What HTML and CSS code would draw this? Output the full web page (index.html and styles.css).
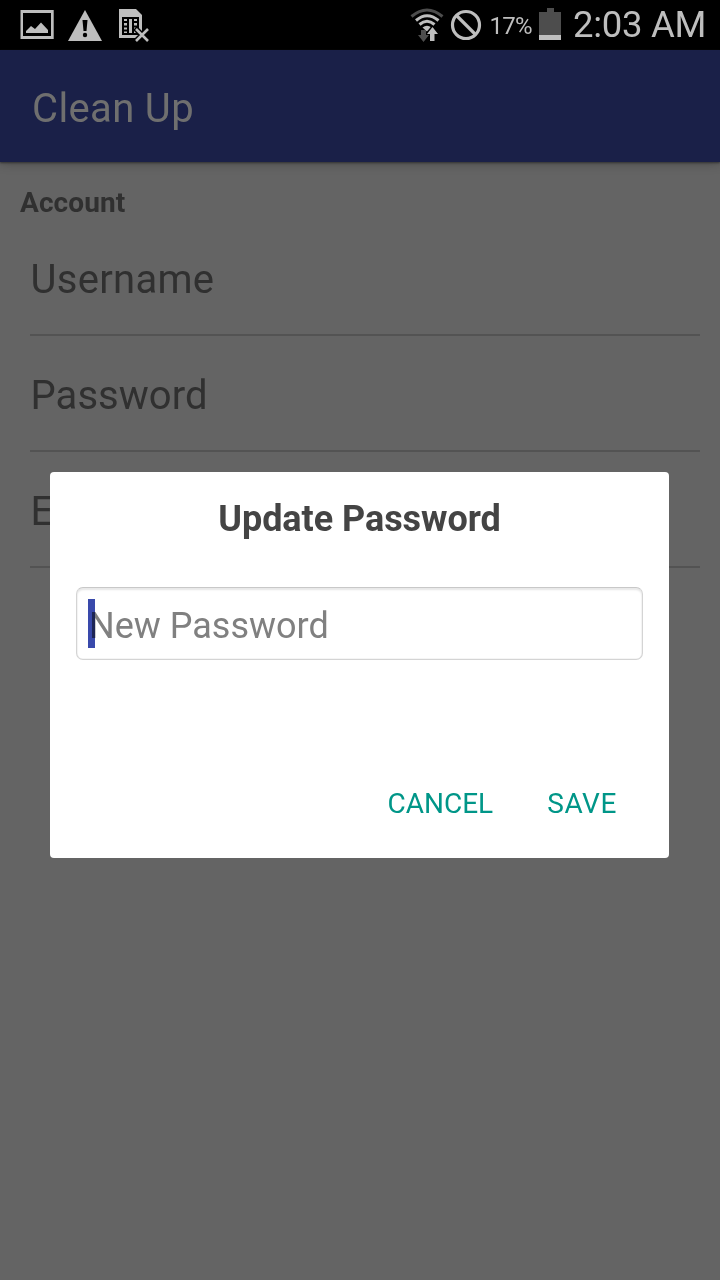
FILE: index.html
```html
<!DOCTYPE html>
<html lang="en">
<head>
<meta charset="utf-8">
<title>Clean Up</title>
<link rel="stylesheet" href="styles.css">
</head>
<body>
<div class="screen">
  <header class="status">
    <svg class="notices" width="170" height="50" viewBox="0 0 170 50">
      <path fill="#bebebe" fill-rule="evenodd" d="M20.500 10H53.700V39H20.500ZM23 13V36H51V13Z"/>
      <path fill="#bebebe" d="M26 33V31L31 26L35 29L41 22.500L48 30V33Z"/>
      <path fill="#bebebe" d="M85 10L102 41H68Z"/>
      <path fill="#000" d="M82.500 20H87.500L86.500 31H83.500Z"/>
      <circle cx="85" cy="35" r="2.200"/>
      <path fill="#bebebe" d="M119 9H136L142 15V38H119Z"/>
      <path fill="#000" fill-rule="evenodd" d="M122 17H139V35H122ZM124 19V21H127V19ZM124 23V25.500H127V23ZM124 27.500V29.500H127V27.500ZM124 31.500V33H127V31.500ZM129 19V33H132V19ZM134 19V21H137V19ZM134 23V25.500H137V23ZM134 27.500V33H137V27.500Z"/>
      <path fill="none" stroke="#000" stroke-width="5.500" d="M135 28L149 42M149 28L135 42"/>
      <path fill="none" stroke="#bebebe" stroke-width="2.600" d="M136 29L148 41M148 29L136 41"/>
    </svg>
    <div class="system">
      <svg width="74" height="50" viewBox="408 0 74 50">
        <g fill="none" stroke-width="3">
          <path stroke="#4d4d4d" d="M411.500 16.500Q427 3.500 442.500 16.500"/>
          <path stroke="#bebebe" d="M416 20.500Q427 11 438.500 20.500"/>
          <path stroke="#bebebe" d="M419.500 24.500Q427 18 434.500 24.500"/>
        </g>
        <path fill="#bebebe" d="M422.500 27.500Q427 23.800 431.500 27.500L427 31.500Z"/>
        <path fill="#000" d="M431.500 26L438 34H425Z"/>
        <path fill="#4d4d4d" d="M421 30H426V35H429L423.500 42L418 35H421Z"/>
        <path fill="#bebebe" d="M432.500 27L438 34H434.500V41H430V34H427Z"/>
        <circle cx="466" cy="25" r="13.500" fill="none" stroke="#bebebe" stroke-width="3.200"/>
        <path stroke="#bebebe" stroke-width="3.200" d="M456.500 15.500L475.500 34.500"/>
      </svg>
      <span class="percent">17%</span>
      <svg class="battery" width="22" height="50" viewBox="0 0 22 50">
        <path fill="#4d4d4d" d="M8 8H15V12H22V40H0V12H8Z"/>
        <path fill="#bebebe" d="M0 35H22V40H0Z"/>
      </svg>
      <time class="clock">2:03 AM</time>
    </div>
  </header>
  <div class="appbar"><h1 class="app-title">Clean Up</h1></div>
  <main class="settings">
    <h2 class="section-title">Account</h2>
    <ul class="rows">
      <li class="row"><span>Username</span></li>
      <li class="row"><span>Password</span></li>
      <li class="row"><span>Email</span></li>
    </ul>
  </main>
  <section class="dialog">
    <h2 class="dialog-title">Update Password</h2>
    <div class="field"><span class="caret"></span><span class="hint">New Password</span></div>
    <div class="actions"><span class="cancel">CANCEL</span><span class="save">SAVE</span></div>
  </section>
</div>
</body>
</html>
```
FILE: styles.css
```css
* { box-sizing: border-box; }
body { margin: 0; font-family: Roboto, "Liberation Sans", sans-serif; }
h1, h2, ul { margin: 0; padding: 0; list-style: none; }
.screen { position: relative; width: 720px; height: 1280px; overflow: hidden; background: #646464; }
.status { display: flex; justify-content: space-between; height: 50px; background: #000; color: #bebebe; }
.system { display: flex; padding-right: 14px; line-height: 50px; white-space: nowrap; }
.percent { width: 57px; padding: 1px 0 0 7.500px; font-size: 24px; letter-spacing: -.7px; }
.clock { width: 145px; padding-left: 12px; font-size: 36.500px; letter-spacing: -.3px; }
.appbar { display: flex; align-items: center; height: 112px; padding: 4px 32px 0; background: #1a2048; box-shadow: 0 1px 2px #333, 0 2px 10px rgba(0, 0, 0, .22); position: relative; }
.app-title { font-size: 40px; font-weight: 400; letter-spacing: .35px; color: #6f6f6f; }
.settings { padding: 21px 20px 0; }
.section-title { height: 37px; line-height: 40px; font-size: 28px; font-weight: 700; letter-spacing: .1px; color: #303030; }
.rows { padding-left: 10px; }
.row { height: 116px; padding: 35px 0 0 .5px; line-height: 50px; border-bottom: 2px solid #535353; font-size: 40px; letter-spacing: .3px; color: #303030; }
.row:nth-child(2) { letter-spacing: .05px; }
.dialog { position: absolute; left: 50px; top: 472px; width: 619px; height: 386px; padding: 22px 25px; border-radius: 4px; background: #fff; }
.dialog-title { line-height: 50px; text-align: center; font-size: 36px; font-weight: 700; letter-spacing: -.05px; color: #444; }
.field { position: relative; height: 73px; margin: 43px .6px 0; padding: 14px 12.400px; border: 1px solid #d4d4d4; border-top: 1px solid #c8c8c8; border-radius: 7px; width: 567.500px; line-height: 46px; font-size: 36px; color: #808080; box-shadow: inset 0 0 0 .5px #ececec, inset 0 2px 2px #e6e6e6; }
.hint { position: relative; top: 1px; }
.caret { position: absolute; left: 11px; top: 11px; width: 7px; height: 49px; background: #3949ab; mix-blend-mode: multiply; z-index: 1; }
.actions { display: flex; justify-content: flex-end; gap: 54px; margin-top: 124px; padding-right: 27px; line-height: 40px; font-size: 28px; color: #009688; }
.save { letter-spacing: .6px; }
```
